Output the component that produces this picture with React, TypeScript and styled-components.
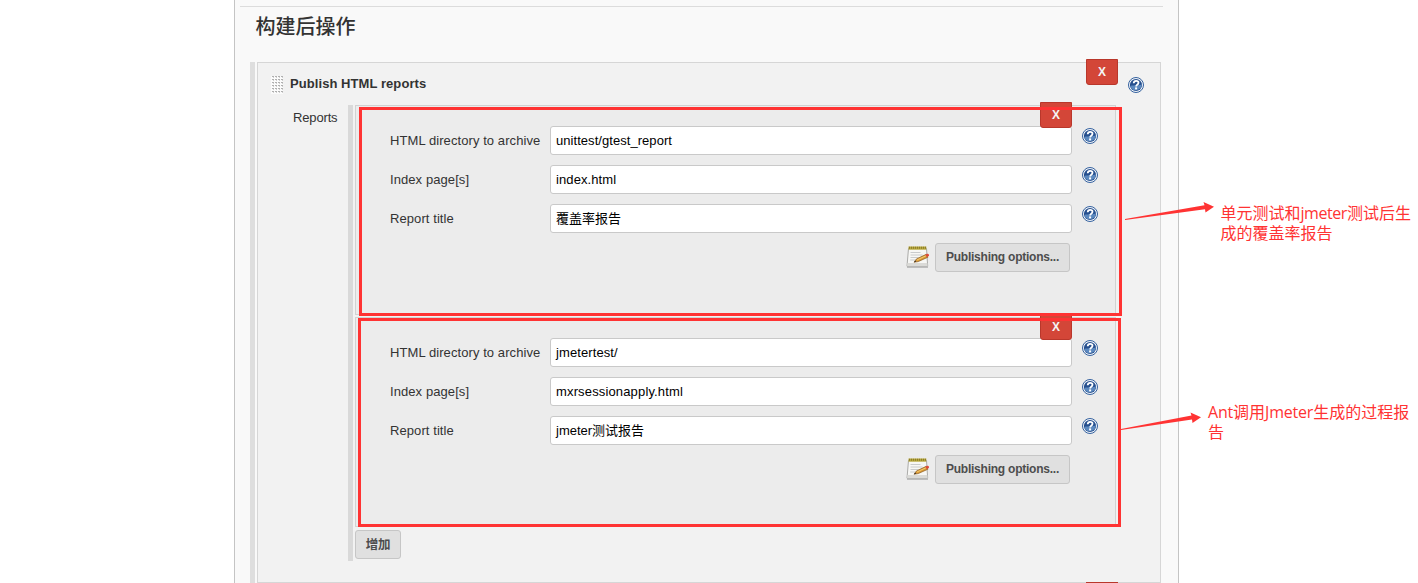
import React from 'react';
import styled, { createGlobalStyle } from 'styled-components';

const GlobalStyle = createGlobalStyle`
  *, *::before, *::after { box-sizing: border-box; }
  body {
    margin: 0;
    background: #fff;
    color: #333;
    font: 13px/18px "Liberation Sans", "Noto Sans CJK SC", sans-serif;
  }
`;

const Screen = styled.div`
  position: relative;
  width: 1418px;
  height: 583px;
  overflow: hidden;
`;

const Page = styled.main`
  width: 945px;
  height: 583px;
  margin-left: 234px;
  padding: 6px 15px 0 5px;
  background: #f9f9f9;
  border: solid #c4c4c4;
  border-width: 0 1px;
`;

const SectionTitle = styled.h1`
  height: 56px;
  margin: 0;
  padding: 5px 0 0 15.5px;
  border-top: 1px solid #dcdcdc;
  font: 500 20px/28px "Noto Sans CJK SC", sans-serif;
`;

const Chunk = styled.section`
  display: flex;
  width: 911px;
  height: 521px;
  margin-left: 10px;
  padding-left: 2px;
  border-left: 5px solid #dedede;
`;

const Step = styled.div`
  flex: 1;
  position: relative;
  border: 1px solid #d6d6d6;
  background: #f2f2f2;
`;

const StepHeader = styled.header`
  display: flex;
  height: 42px;
  padding: 12px 16px 0 13px;
`;

const StepName = styled.strong`
  flex: 1;
  margin-left: 7px;
  color: #333;
  letter-spacing: 0.07px;
`;

const Handle = styled.div`
  width: 12px;
  height: 18px;
  margin-top: 1px;
  background:
    conic-gradient(from 90deg at 1px 1px, transparent 270deg, #b0b0b0 0) 0 0 / 3px 3px,
    conic-gradient(from 90deg at 2px 2px, #fbfbfb 270deg, #cfcfcf 0) 0 0 / 3px 3px;
`;

const Reports = styled.div`
  display: flex;
`;

const ReportsLabel = styled.div`
  width: 90px;
  padding: 4px 0 0 35px;
  letter-spacing: -0.15px;
`;

const ReportList = styled.div`
  width: 768px;
  height: 456px;
  padding-left: 2px;
  border-left: 5px solid #d9d9d9;
`;

const ReportPanel = styled.article`
  position: relative;
  width: 761px;
  height: 210px;
  margin-bottom: 2px;
  padding: 20px 16px 0 34px;
  border: 1px solid #d2d2d2;
  background: #ececec;
`;

const Field = styled.div`
  display: grid;
  grid-template-columns: 160px 522px 16px;
  grid-template-rows: 29px;
  height: 29px;
  margin-bottom: 10px;
`;

const FieldLabel = styled.span`
  padding-top: 6px;
  letter-spacing: 0.08px;
`;

const FieldValue = styled.div<{ $spacing: number }>`
  height: 29px;
  padding: 5px;
  border: 1px solid #c9c9c9;
  border-radius: 3px;
  background: #fff;
  color: #000;
  letter-spacing: ${p => p.$spacing}px;
`;

const HelpSvg = styled.svg<{ $left: number }>`
  display: block;
  flex: none;
  width: 16px;
  height: 16px;
  margin: 2px 0 0 ${p => p.$left}px;
`;

const OptionsRow = styled.div`
  display: flex;
  width: 680px;
  justify-content: flex-end;
  gap: 5.5px;
`;

const Button = styled.button<{ $width: number }>`
  width: ${p => p.$width}px;
  height: 29px;
  padding: 0 0 1px;
  border: 1px solid #c6c6c6;
  border-radius: 3px;
  background: #e0e0e0;
  color: #4d4d4d;
  font: bold 12px/18px "Liberation Sans", "Noto Sans CJK SC", sans-serif;
  letter-spacing: -0.23px;
  white-space: nowrap;
`;

const AddButton = styled(Button)`
  display: block;
  margin-top: 3px;
  padding: 1px 0 0;
  font-size: 12.5px;
`;

/* Hangs over the top border of the box it removes. */
const DeleteButton = styled.button<{ $right: number }>`
  position: absolute;
  top: -4px;
  right: ${p => p.$right}px;
  width: 32px;
  height: 26px;
  padding: 0 0 1px;
  border: 1px solid #b9372b;
  border-radius: 0 0 3px 3px;
  background: #d34638;
  color: #f4f4f4;
  font: bold 12px/16px "Liberation Sans", sans-serif;
`;

const Highlight = styled.div<{ $x: number; $y: number }>`
  position: absolute;
  left: ${p => p.$x}px;
  top: ${p => p.$y}px;
  width: 763px;
  height: 209px;
  border: 3px solid #ff3333;
`;

const Arrow = styled.svg<{ $x: number; $y: number }>`
  position: absolute;
  left: ${p => p.$x}px;
  top: ${p => p.$y}px;
  width: 96px;
  height: 24px;
`;

const Note = styled.div<{ $x: number; $y: number }>`
  position: absolute;
  left: ${p => p.$x}px;
  top: ${p => p.$y}px;
  color: #ff3333;
  font: 400 16px/20px "Open Sans", "Noto Sans CJK SC", sans-serif;
  white-space: nowrap;
`;

const Latin = styled.span<{ $spacing: number }>`
  letter-spacing: ${p => p.$spacing}px;
`;

const NextStepEdge = styled.div`
  position: absolute;
  left: 1086px;
  top: 582px;
  width: 32px;
  height: 1px;
  background: #b9372b;
`;

const Help = ({ left = 0 }: { left?: number }) => (
  <HelpSvg $left={left} viewBox="0 0 16 16">
    <circle cx="8" cy="8" r="7.5" fill="#f4f7fb" stroke="#34619e" />
    <circle cx="8" cy="8" r="6.1" fill="#264f8e" />
    <path d="M2.2 9A6 6 0 0 0 13.9 7C11.5 9.3 6.5 7.6 2.2 9Z" fill="#5c89bf" />
    <path d="M5.7 6.3C5.8 4.7 6.7 3.9 8.1 3.9s2.4.7 2.4 1.9-.8 1.6-1.5 2.1c-.6.5-.8.8-.8 1.5" fill="none" stroke="#fff" strokeWidth="1.8" />
    <rect x="7.1" y="10.4" width="2" height="2" fill="#fff" />
  </HelpSvg>
);

const NotepadSvg = styled.svg`
  flex: none;
  width: 24px;
  height: 24px;
  margin-top: 2px;
`;

const Notepad = () => (
  <NotepadSvg viewBox="0 0 24 24">
    <path d="M1 22.2h21" stroke="#bdbdbd" strokeWidth="1.6" />
    <path d="M2.5 3.5h18l1.2 17.7H1Z" fill="#f7f7f5" stroke="#a3a3a0" strokeWidth=".9" />
    <path d="M1.4 18h20l.2 3H1.2Z" fill="#dadad7" />
    <path d="M2.5 1.5h17.8v3.2H2.5Z" fill="#b9a93c" />
    <path d="M3 2.7h17" stroke="#8c7d2c" strokeWidth="2" strokeDasharray="1 1" />
    <path d="M4.5 7.5h10M4.5 10h12M4.5 12.5h8M4.2 15h5" stroke="#c9cbcc" />
    <path d="M8 17.2l2.5-3.3 9.8-4.6 1.6 2.9-9.7 4.4Z" fill="#db9a35" stroke="#88591c" strokeWidth=".7" />
    <path d="M11 15l9-4.2" stroke="#f5cf75" strokeWidth=".9" />
    <path d="M8 17.2l1.4-1.8.8 1.4Z" fill="#333" />
    <path d="M19.4 9.7l1.8-1c1.4-.5 2.6 1.7 1.3 2.5l-1.8.9Z" fill="#de4a3b" />
  </NotepadSvg>
);

const reports = [
  [['unittest/gtest_report', 0.05], ['index.html', 0.1], ['覆盖率报告', 0]],
  [['jmetertest/', 0.1], ['mxrsessionapply.html', 0.15], ['jmeter测试报告', 0]],
] as [string, number][][];
const labels = ['HTML directory to archive', 'Index page[s]', 'Report title'];

const NoteArrow = ({ x, y, long }: { x: number; y: number; long?: boolean }) => (
  <Arrow $x={x} $y={y} viewBox="0 0 96 24">
    {long
      ? <path d="M0 17.1 79.5 3.2 78.5 0 89 4.8 80.5 10.6 80 7.2 0 18Z" fill="#ff3333" />
      : <path d="M0 17.1 70.5 3.6 69.5 0.4 80 5.2 71.5 11 71 7.6 0 18Z" fill="#ff3333" />}
  </Arrow>
);

export default function App() {
  return (
    <Screen>
      <GlobalStyle />
      <Page>
        <SectionTitle>构建后操作</SectionTitle>
        <Chunk>
          <Step>
            <DeleteButton $right={42}>X</DeleteButton>
            <StepHeader>
              <Handle />
              <StepName>Publish HTML reports</StepName>
              <Help />
            </StepHeader>
            <Reports>
              <ReportsLabel>Reports</ReportsLabel>
              <ReportList>
                {reports.map(fields => (
                  <ReportPanel key={fields[0][0]}>
                    <DeleteButton $right={43}>X</DeleteButton>
                    {fields.map(([value, spacing], i) => (
                      <Field key={labels[i]}>
                        <FieldLabel>{labels[i]}</FieldLabel>
                        <FieldValue $spacing={spacing}>{value}</FieldValue>
                        <Help left={10} />
                      </Field>
                    ))}
                    <OptionsRow>
                      <Notepad />
                      <Button $width={135}>Publishing options...</Button>
                    </OptionsRow>
                  </ReportPanel>
                ))}
                <AddButton $width={46}>增加</AddButton>
              </ReportList>
            </Reports>
          </Step>
        </Chunk>
      </Page>
      <NextStepEdge />
      <Highlight $x={359} $y={107} />
      <Highlight $x={358} $y={318} />
      <NoteArrow x={1125} y={202} long />
      <NoteArrow x={1121} y={412} />
      <Note $x={1220.5} $y={203}>单元测试和<Latin $spacing={-0.45}>jmeter</Latin>测试后生<br />成的覆盖率报告</Note>
      <Note $x={1208} $y={402}><Latin $spacing={-0.2}>Ant</Latin>调用<Latin $spacing={-0.2}>Jmeter</Latin>生成的过程报<br />告</Note>
    </Screen>
  );
}
